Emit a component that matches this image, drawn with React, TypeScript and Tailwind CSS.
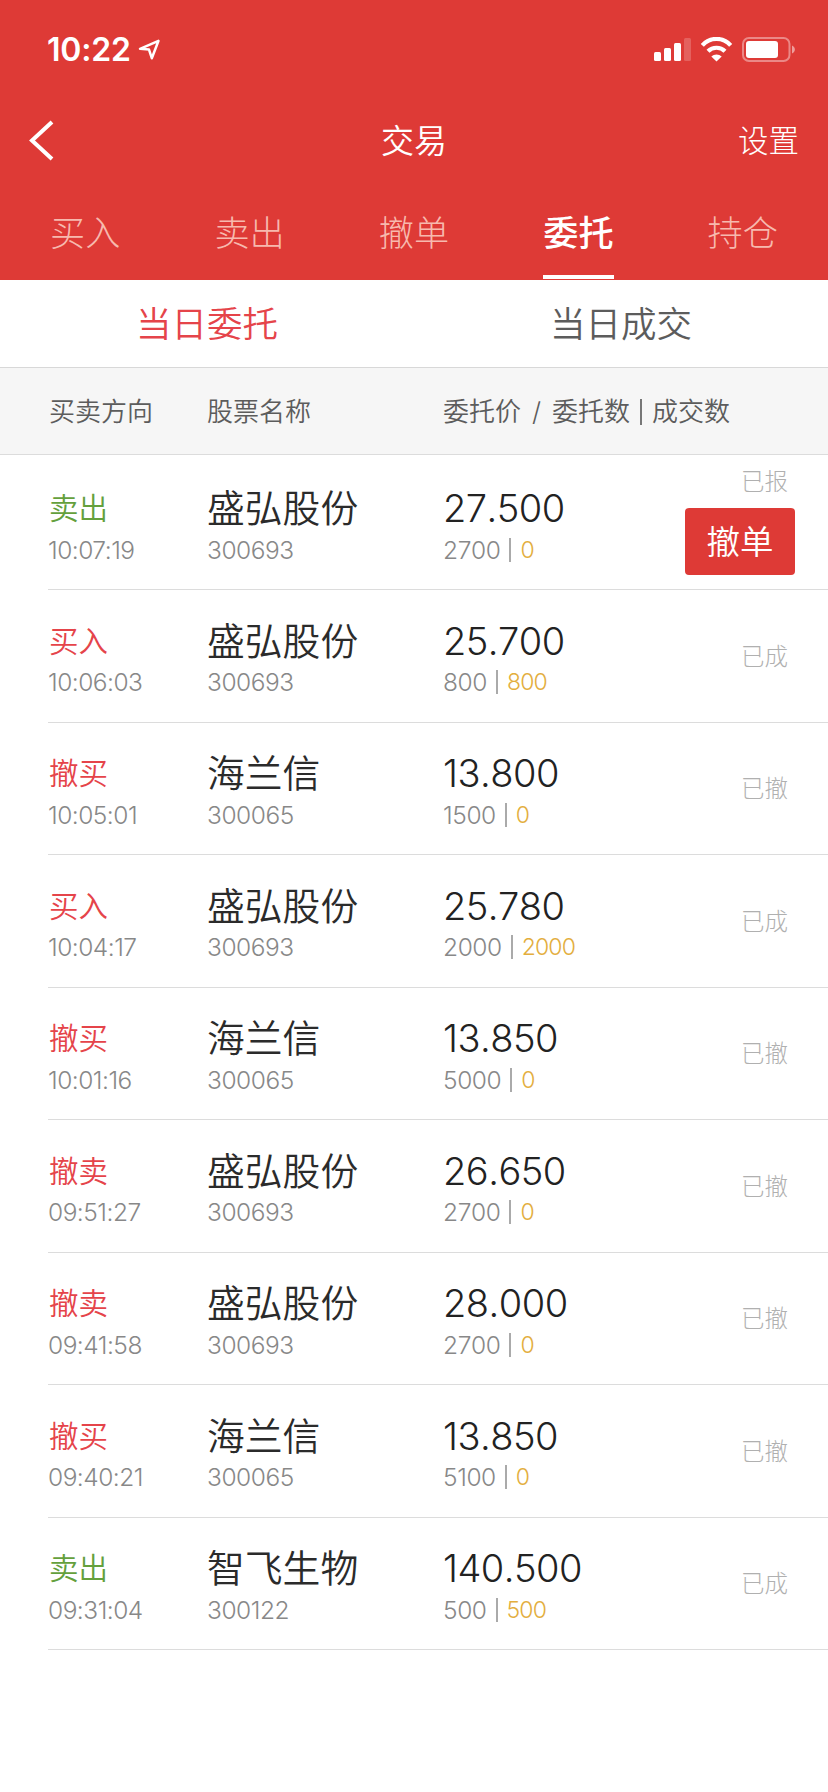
type Order = {
  side: string;
  time: string;
  name: string;
  code: string;
  price: string;
  amount: number;
  filled: number;
  status: string;
  cancellable?: boolean;
};

const tabs = ["买入", "卖出", "撤单", "委托", "持仓"];

const orders: Order[] = [
  { side: "卖出", time: "10:07:19", name: "盛弘股份", code: "300693", price: "27.500", amount: 2700, filled: 0, status: "已报", cancellable: true },
  { side: "买入", time: "10:06:03", name: "盛弘股份", code: "300693", price: "25.700", amount: 800, filled: 800, status: "已成" },
  { side: "撤买", time: "10:05:01", name: "海兰信", code: "300065", price: "13.800", amount: 1500, filled: 0, status: "已撤" },
  { side: "买入", time: "10:04:17", name: "盛弘股份", code: "300693", price: "25.780", amount: 2000, filled: 2000, status: "已成" },
  { side: "撤买", time: "10:01:16", name: "海兰信", code: "300065", price: "13.850", amount: 5000, filled: 0, status: "已撤" },
  { side: "撤卖", time: "09:51:27", name: "盛弘股份", code: "300693", price: "26.650", amount: 2700, filled: 0, status: "已撤" },
  { side: "撤卖", time: "09:41:58", name: "盛弘股份", code: "300693", price: "28.000", amount: 2700, filled: 0, status: "已撤" },
  { side: "撤买", time: "09:40:21", name: "海兰信", code: "300065", price: "13.850", amount: 5100, filled: 0, status: "已撤" },
  { side: "卖出", time: "09:31:04", name: "智飞生物", code: "300122", price: "140.500", amount: 500, filled: 500, status: "已成" },
];

function StatusBar() {
  return (
    <div className="flex h-[100px] items-center justify-between pl-[47px] pr-[33px] text-white">
      <div className="flex items-center gap-[7px]">
        <span className="text-[32px] font-semibold leading-none tracking-[-0.2px]">10:22</span>
        <svg width="23" height="22" viewBox="0 0 23 22" fill="none" stroke="currentColor" strokeWidth="2.5" strokeLinejoin="round">
          <path d="M20.5 1.8 2 9.8l9 .8 2.8 8.6z" />
        </svg>
      </div>
      <svg width="142" height="26" viewBox="652 37 142 26" fill="currentColor">
        {/* Signal */}
        <rect x="653" y="52" width="7" height="9" rx="1.5" />
        <rect x="663" y="48" width="7" height="13" rx="1.5" />
        <rect x="673" y="43" width="7" height="18" rx="1.5" />
        <rect x="683" y="38" width="7" height="23" rx="1.5" opacity="0.2" />
        {/* Wifi */}
        <g fill="none" stroke="currentColor" strokeWidth="4.2">
          <path d="M701.3 45.3a19 19 0 0 1 28.4 0" />
          <path d="M707 51.3a12 12 0 0 1 17 0" />
        </g>
        <path d="M710.3 56.6a7.5 7.5 0 0 1 10.4 0L715.5 61.6z" />
        {/* Battery */}
        <rect x="742" y="38" width="46.5" height="23" rx="6" fill="none" stroke="currentColor" strokeWidth="2" opacity="0.4" />
        <rect x="745" y="41" width="32" height="17" rx="3" />
        <path d="M791 45.5v8c3.8-1.6 3.8-6.4 0-8z" opacity="0.5" />
      </svg>
    </div>
  );
}

function OrderRow({ order }: { order: Order }) {
  return (
    <div className="ml-[48px] flex h-[132.5px] border-b border-[#dcdcdc] pt-[30.5px] first:h-[135px] first:pt-[33px]">
      <div className="w-[159px]">
        <p className={`pl-px text-[29.5px] font-[350] leading-[40px] ${order.side === "卖出" ? "text-[#64a03c]" : "text-[#e5444a]"}`}>
          {order.side}
        </p>
        <p className="mt-[7.5px] text-[24.5px] font-light leading-[28px] tracking-[-0.5px] text-[#888]">{order.time}</p>
      </div>
      <div className="w-[236px]">
        <p className="text-[37.8px] font-[350] leading-[40px] text-[#2b2b2b]">{order.name}</p>
        <p className="mt-[7.5px] text-[24.5px] font-light leading-[28px] tracking-[-0.45px] text-[#888]">{order.code}</p>
      </div>
      <div className="flex-1">
        <p className="text-[38px] font-[350] leading-[40px] tracking-[-0.5px] text-[#222] [font-kerning:none]">{order.price}</p>
        <p className="mt-[7.5px] flex items-center text-[24.5px] font-light leading-[28px] tracking-[-0.4px] text-[#888] [font-kerning:none]">
          {order.amount}
          <span className="mx-[9px] h-[24px] w-[2px] bg-[#aaa]" />
          <span className="text-[23px] tracking-[-0.9px] text-[#e3ae3e]">{order.filled}</span>
        </p>
      </div>
      {order.cancellable ? (
        <div className="-mt-[23px] flex flex-col items-end pr-[33px]">
          <span className="pr-[7px] text-[23.5px] font-light leading-[34px] text-[#b0b0b0]">{order.status}</span>
          <button className="mt-[9px] h-[67px] w-[110px] rounded-[4px] bg-[#de3a36] pt-[2px] text-[33.5px] font-[350] leading-none text-white">
            撤单
          </button>
        </div>
      ) : (
        <span className="-mt-[29px] self-center pr-[40px] text-[23.5px] font-light leading-[34px] text-[#b0b0b0]">
          {order.status}
        </span>
      )}
    </div>
  );
}

export default function App() {
  return (
    <div className="min-h-[1792px] w-[828px] bg-white font-['Inter','Noto_Sans_CJK_SC',sans-serif]">
      <header className="h-[280px] bg-[#de3a36]">
        <StatusBar />

        {/* Title bar */}
        <div className="grid h-[82px] grid-cols-3 items-center px-[29px] text-white">
          <svg width="26" height="42" viewBox="0 0 26 42" fill="none" stroke="currentColor" strokeWidth="4">
            <path d="M23 2 3 20.5 23 39" />
          </svg>
          <h1 className="text-center text-[33px] font-[350] leading-none">交易</h1>
          <span className="text-right text-[30.5px] font-light leading-none">设置</span>
        </div>

        {/* Trade tabs */}
        <nav className="grid h-[98px] grid-cols-5 px-[3px]">
          {tabs.map((tab) => (
            <div key={tab} className="flex justify-center">
              <span
                className={`h-[97px] pt-[26px] text-[35.2px] leading-[50px] ${
                  tab === "委托" ? "border-b-4 border-white font-medium text-white" : "font-light text-[#f7b9ae]"
                }`}
              >
                {tab}
              </span>
            </div>
          ))}
        </nav>
      </header>

      <div className="grid h-[88px] grid-cols-2 items-center border-b border-[#d8d8d8] pt-[3px] text-center text-[35.5px] font-[350] leading-none">
        <span className="text-[#e5444a]">当日委托</span>
        <span className="text-[#5c5c5c]">当日成交</span>
      </div>

      {/* Column headings */}
      <div className="flex h-[87px] items-center border-b border-[#dcdcdc] bg-[#f6f6f6] pl-[48px] pt-[2px] text-[26px] font-[350] leading-none text-[#5c5c5c]">
        <span className="w-[159px] pl-px">买卖方向</span>
        <span className="w-[236px]">股票名称</span>
        <span className="flex items-center">
          委托价<span className="mx-[11px]">/</span>委托数
          <span className="mx-[10px] h-[26px] w-[2px] bg-[#777]" />
          成交数
        </span>
      </div>

      <div>
        {orders.map((order) => (
          <OrderRow key={order.time} order={order} />
        ))}
      </div>
    </div>
  );
}
